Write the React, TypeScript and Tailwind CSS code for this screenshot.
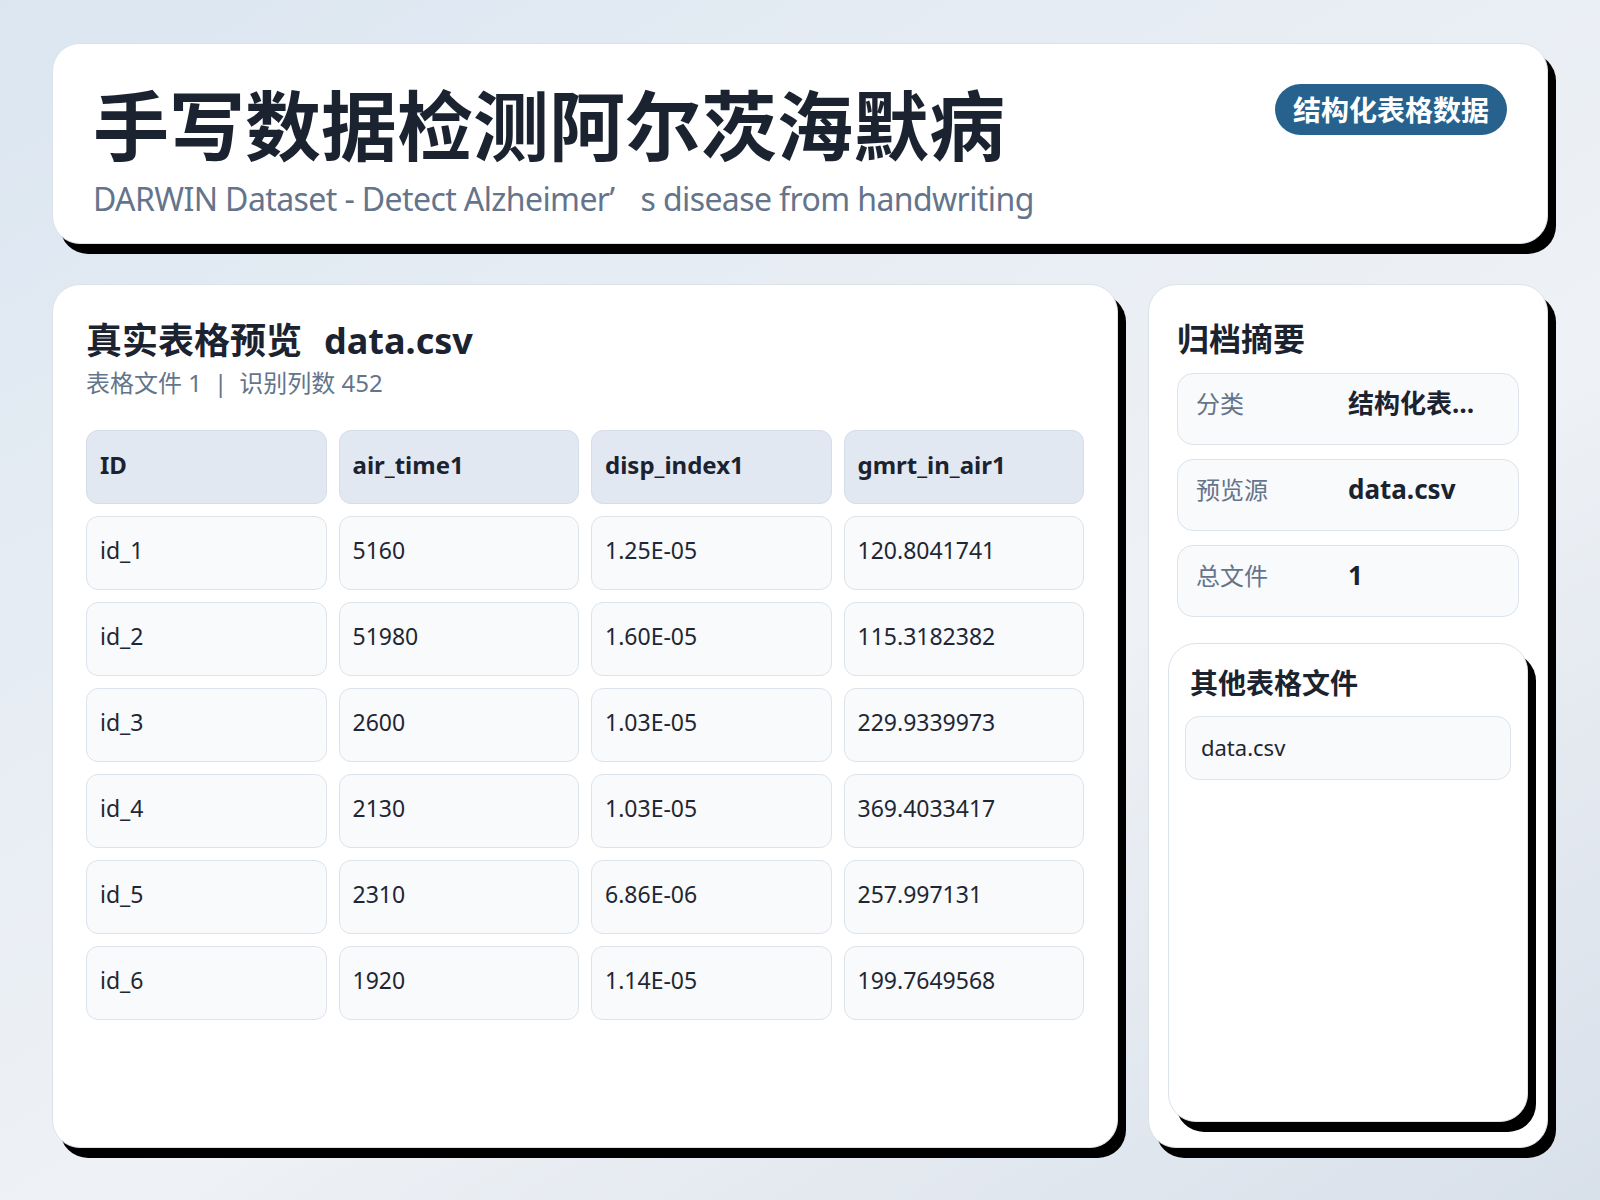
const COLUMNS = ["ID", "air_time1", "disp_index1", "gmrt_in_air1"];

const ROWS: string[][] = [
  ["id_1", "5160", "1.25E-05", "120.8041741"],
  ["id_2", "51980", "1.60E-05", "115.3182382"],
  ["id_3", "2600", "1.03E-05", "229.9339973"],
  ["id_4", "2130", "1.03E-05", "369.4033417"],
  ["id_5", "2310", "6.86E-06", "257.997131"],
  ["id_6", "1920", "1.14E-05", "199.7649568"],
];

const SUMMARY = [
  { label: "分类", value: "结构化表格数据" },
  { label: "预览源", value: "data.csv" },
  { label: "总文件", value: "1" },
];

export default function App() {
  return (
    <div className="w-[1600px] h-[1200px] flex flex-col gap-[40px] px-[52px] pt-[43px] pb-[52px] bg-[linear-gradient(150deg,#dbe6f1_0%,#e9eef4_40%,#eef1f5_60%,#d8e0ea_100%)] font-['Noto_Sans','Noto_Sans_CJK_SC',sans-serif] text-[#1b2330]">
      {/* Header */}
      <header className="h-[201px] shrink-0 flex justify-between rounded-[28px] border border-[#dbe2ea] bg-white px-[40px] pt-[40px] shadow-[8px_10px_0_#000]">
        <div>
          <h1 className="text-[76px] font-bold leading-[1.1] text-[#1b2330]">手写数据检测阿尔茨海默病</h1>
          <p className="mt-[10px] text-[32px] leading-[1.3] tracking-[-0.6px] text-[#64748b]">
            DARWIN Dataset - Detect Alzheimer<span className="inline-block w-[31px]">’</span>s disease from handwriting
          </p>
        </div>
        <span className="h-[51px] flex items-center rounded-full bg-[#27628f] px-[18px] text-[28px] font-bold text-white">
          结构化表格数据
        </span>
      </header>

      <div className="flex-1 grid grid-cols-[1fr_400px] gap-[30px] min-h-0">
        {/* Table preview */}
        <section className="rounded-[28px] border border-[#dbe2ea] bg-white p-[33px] shadow-[8px_10px_0_#000]">
          <h2 className="flex items-baseline gap-[22px] text-[36px] font-bold leading-[1.3]">
            <span>真实表格预览</span>
            <span>data.csv</span>
          </h2>
          <div className="flex items-center text-[24px] leading-[1.5] text-[#64748b]">
            <span>表格文件 1</span>
            <span className="mx-[12px]">|</span>
            <span>识别列数 452</span>
          </div>

          <div className="mt-[29px] grid grid-cols-4 gap-[12px]">
            {COLUMNS.map((col) => (
              <div
                key={col}
                className="h-[74px] flex items-center rounded-xl border border-[#d5dde8] bg-[#e2e8f1] px-[13px] pb-[4px] text-[24px] font-bold text-[#1b2330]"
              >
                {col}
              </div>
            ))}
            {ROWS.map((row) =>
              row.map((cell, i) => (
                <div
                  key={row[0] + i}
                  className="h-[74px] flex items-center rounded-xl border border-[#dde3eb] bg-[#f8fafc] px-[13px] pb-[5px] text-[23px] text-[#1e2733]"
                >
                  {cell}
                </div>
              ))
            )}
          </div>
        </section>

        {/* Summary */}
        <aside className="flex flex-col rounded-[28px] border border-[#dbe2ea] bg-white px-[19px] pt-[33px] pb-[25px] shadow-[8px_10px_0_#000]">
          <div className="px-[9px]">
            <h3 className="text-[32px] font-bold leading-[1.3]">归档摘要</h3>
            <div className="mt-[13px] flex flex-col gap-[14px]">
              {SUMMARY.map((item) => (
                <div
                  key={item.label}
                  className="h-[72px] grid grid-cols-[152px_148px] items-center rounded-2xl border border-[#dde3eb] bg-[#f8fafc] px-[18px] pb-[10px]"
                >
                  <span className="text-[24px] text-[#64748b]">{item.label}</span>
                  <span className="truncate text-[26px] font-bold text-[#1b2330]">{item.value}</span>
                </div>
              ))}
            </div>
          </div>

          <div className="mt-[26px] flex-1 rounded-[28px] border border-[#dbe2ea] bg-white px-[16px] pt-[21px] shadow-[8px_10px_0_#000]">
            <h3 className="px-[5px] text-[28px] font-bold leading-[1.3]">其他表格文件</h3>
            <div className="mt-[15px] h-[64px] flex items-center rounded-[14px] border border-[#dde3eb] bg-[#f8fafc] px-[15px] text-[22px] text-[#1e2733]">
              data.csv
            </div>
          </div>
        </aside>
      </div>
    </div>
  );
}
